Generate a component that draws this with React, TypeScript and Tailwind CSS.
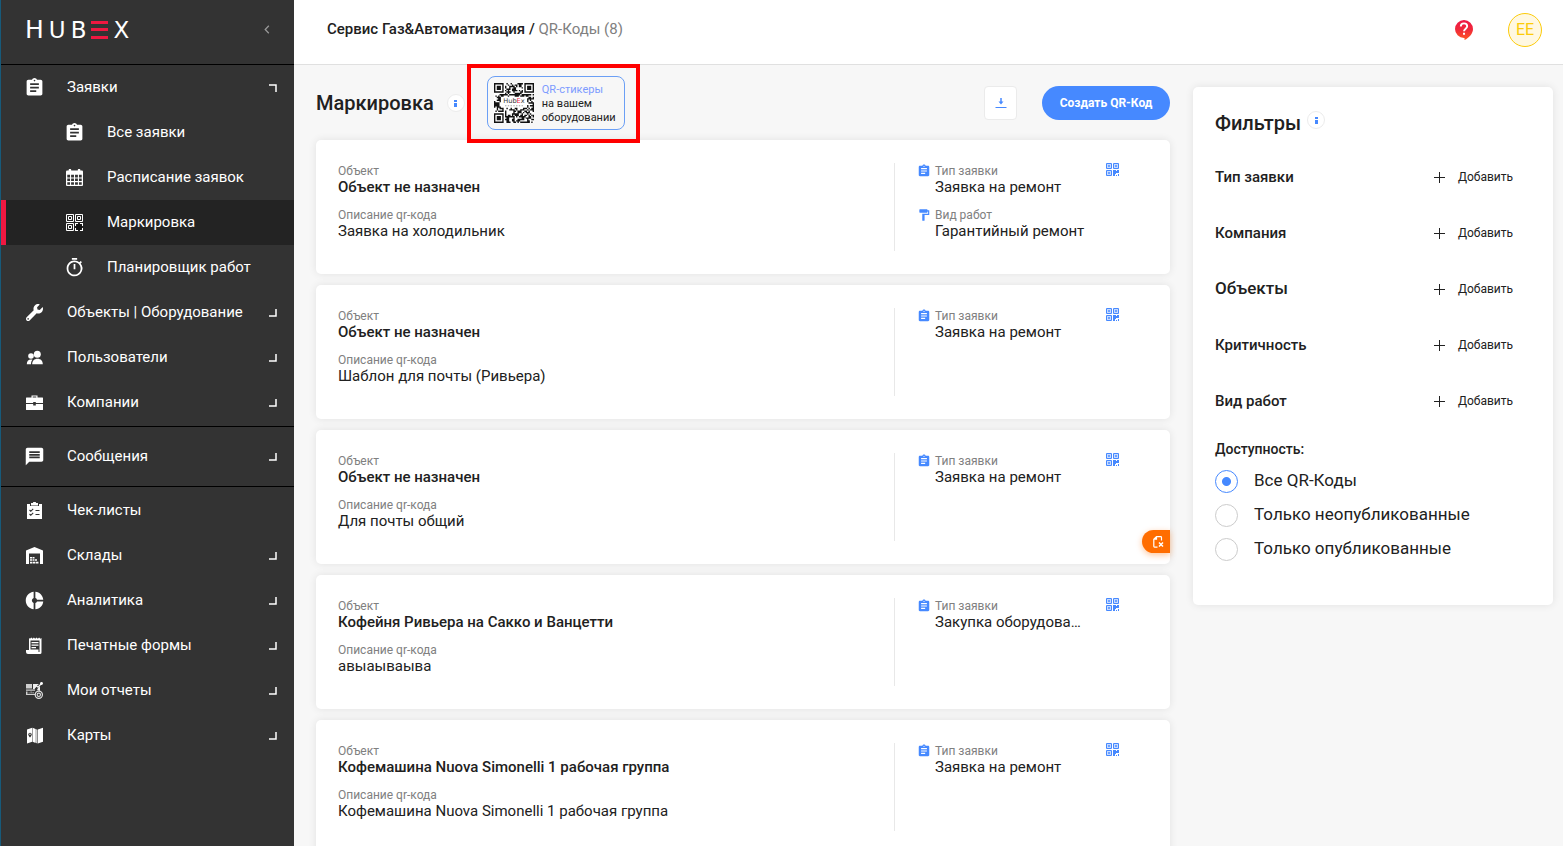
import type { ReactNode } from "react";
import { MdAssignment, MdDonutSmall, MdFormatPaint, MdMessage, MdOutlineTimer } from "react-icons/md";
import { FaWrench } from "react-icons/fa";

type IconProps = { className?: string };

function CalendarIcon({ className }: IconProps) {
  return (
    <svg viewBox="0 0 16 16" className={className} fill="currentColor" aria-hidden="true">
      <path
        fillRule="evenodd"
        d="M2.5 1.5V1a1.2 1.2 0 0 1 2.4 0v.5h6.2V1a1.2 1.2 0 0 1 2.4 0v.5H15a1 1 0 0 1 1 1V15a1 1 0 0 1-1 1H1a1 1 0 0 1-1-1V2.500a1 1 0 0 1 1-1zM1.200 5.500v2.500h2.600v-2.500zM4.800 5.500v2.500h2.700v-2.500zM8.500 5.500v2.500h2.700v-2.500zM12.200 5.500v2.500h2.600v-2.500zM1.200 9v2.400h2.600V9zM4.800 9v2.400h2.700V9zM8.500 9v2.400h2.700V9zM12.200 9v2.400h2.600V9zM1.200 12.400v2.400h2.600v-2.400zM4.800 12.400v2.400h2.700v-2.400zM8.500 12.400v2.400h2.700v-2.400zM12.200 12.400v2.400h2.600v-2.400z"
      />
    </svg>
  );
}

function QrMenuIcon({ className }: IconProps) {
  return (
    <svg viewBox="0 0 17 17" className={className} aria-hidden="true">
      <g fill="none" stroke="currentColor">
        <path d="M.5.5h7v7h-7zM9.500.5h7v7h-7zM.5 9.500h7v7h-7z" />
        <path d="M2.500 2.500h3v3h-3zM11.500 2.500h3v3h-3zM2.500 11.500h3v3h-3z" />
      </g>
      <path fill="currentColor" d="M9 9h3v1h-2v2H9zM14 9h3v3h-1v-2h-2zM9 14h1v2h2v1H9zM16 14h1v3h-3v-1h2z" />
      <circle cx="13" cy="13" r="3" fill="#111" />
    </svg>
  );
}

function QrCardIcon({ className }: IconProps) {
  return (
    <svg viewBox="0 0 13 13" className={className} aria-hidden="true">
      <path fill="currentColor" opacity=".3" d="M1 1h4v4H1zM8 1h4v4H8zM1 8h4v4H1z" />
      <g fill="none" stroke="currentColor">
        <path d="M.5.5h5v5h-5zM7.500.5h5v5h-5zM.5 7.500h5v5h-5z" />
      </g>
      <path fill="currentColor" opacity=".7" d="M2 2h2v2H2zM9 2h2v2H9zM2 9h2v2H2z" />
      <path fill="currentColor" d="M7 7h3v1h1V7h2v3h-3v1H9v2H7zM10 12h1v1h-1zM12 11h1v2h-1z" />
    </svg>
  );
}

function PeopleIcon({ className }: IconProps) {
  return (
    <svg viewBox="0 0 17 17" className={className} fill="currentColor" aria-hidden="true">
      <circle cx="11.300" cy="5.300" r="3.500" />
      <circle cx="5" cy="7" r="2.800" />
      <path d="M6.200 15.200c0-3.400 2-5.500 5.300-5.500s5.300 2.100 5.300 5.500zM.8 15.200c0-3 1.500-4.800 4.200-4.800.6 0 1.100.1 1.500.3C5.300 11.800 5 13.300 5 15.200z" />
    </svg>
  );
}

function BriefcaseIcon({ className }: IconProps) {
  return (
    <svg viewBox="0 0 17 17" className={className} fill="currentColor" aria-hidden="true">
      <path d="M5.500 3.500V1.500h6v2M.5 3.500h16a.5.5 0 0 1 .5.5v5H9.800V8H7.200v1H0V4a.5.5 0 0 1 .5-.5zM0 10h7.200v1.500h2.600V10H17v5.500a.5.5 0 0 1-.5.500H.5a.5.500 0 0 1-.5-.5z" />
      <path d="M6.700 3.500V2.500h3.600v1z" fill="#333" />
    </svg>
  );
}

function ChecklistIcon({ className }: IconProps) {
  return (
    <svg viewBox="0 0 17 17" className={className} aria-hidden="true">
      <path fill="currentColor" d="M1 2h3V4h9V2h3v15H1zM5 1h2a1.500 1.500 0 0 1 3 0h2v2.500H5z" />
      <path fill="none" stroke="#333" strokeWidth="1.100" d="M3.500 8l1.300 1.300 2.400-2.500M3.500 12l1.300 1.300 2.400-2.500M9.500 8.500h4M9.500 12.500h4" />
    </svg>
  );
}

function WarehouseIcon({ className }: IconProps) {
  return (
    <svg viewBox="0 0 17 17" className={className} fill="currentColor" aria-hidden="true">
      <path d="M0 3.500L8.500 0 17 3.500V17h-3V6.500H3V17H0z" />
      <path d="M4 10h2v1.500H4zM6.500 10h2v1.500h-2zM4 12.300h2v1.500H4zM6.500 12.300h2v1.500h-2zM9 12.300h2v1.500H9zM4 14.700h2.500v1.800H4zM7 14.700h2.300v1.800H7zM9.800 14.700h2.700v1.800H9.800z" />
    </svg>
  );
}

function FormsIcon({ className }: IconProps) {
  return (
    <svg viewBox="0 0 17 17" className={className} aria-hidden="true">
      <path fill="currentColor" d="M3 1l1 .8L5.300.5l1.300 1.300L7.900.5l1.300 1.300L10.500.5l1.300 1.300L13.100.5l1.200 1.300L15.500 1v14.500a1.500 1.500 0 0 1-1.500 1.500H2a2 2 0 0 1-2-2v-2h3z" />
      <path fill="#333" d="M4.500 3.500h9V15h-1v-2.500h-8z" />
      <path fill="currentColor" d="M5.500 5h7v1.300h-7zM5.500 7.500h7v1.300h-7zM5.500 10h4.500v1.200H5.500z" />
    </svg>
  );
}

function ReportsIcon({ className }: IconProps) {
  return (
    <svg viewBox="0 0 17 17" className={className} aria-hidden="true">
      <path fill="#cfcfcf" d="M0 2h6v4.500H0zM0 7.500h9v1.200H0zM0 9.500h1.500V12H9v1H0z" />
      <path fill="#aaa" d="M2.500 10.500h1.200v1H2.500zM4.500 9.500h1.200v2H4.500zM6.500 10h1.200v1.500H6.500z" />
      <path fill="#eee" d="M7 2h6l-3 2.500L8 7H7zM14 4v5l-3-1 1-2z" />
      <path fill="none" stroke="#f5f5f5" strokeWidth="1.200" d="M7.500 7l3-3.200 1.500 1.400L16 1" />
      <circle cx="15.500" cy="1.500" r="1.400" fill="#fff" />
      <circle cx="12.800" cy="12.800" r="3.600" fill="#333" stroke="#e5e5e5" strokeWidth="1.200" />
      <circle cx="12.800" cy="12.800" r="1.700" fill="none" stroke="#ddd" strokeWidth="1.100" />
    </svg>
  );
}

function MapIcon({ className }: IconProps) {
  return (
    <svg viewBox="0 0 17 17" className={className} aria-hidden="true">
      <path fill="#fff" d="M1 2.500L6.200.8v14L1 16.500zM11.800 2.500L17 .8v14L11.800 16.500z" />
      <path fill="#fff" d="M6.600.8L9 1.800v14L6.600 14.800z" />
      <path fill="#cfcfcf" d="M9 1.800l2.400 1v13.700l-2.400-1z" />
      <path fill="#333" d="M2.300 7.400a1.700 1.700 0 0 1 3.400 0c0 1.200-1.700 3-1.700 3S2.300 8.600 2.300 7.400z" />
      <circle cx="4" cy="7.300" r=".7" fill="#fff" />
    </svg>
  );
}

function Corner({ open }: { open?: boolean }) {
  return (
    <svg viewBox="0 0 8 8" className="size-2 shrink-0 text-white" aria-hidden="true">
      <path fill="none" stroke="currentColor" strokeWidth="1.500" d={open ? "M0 1h7v7" : "M0 7h7V0"} />
    </svg>
  );
}

type Item = {
  label: string;
  icon: ReactNode;
  sub?: boolean;
  active?: boolean;
  arrow?: "open" | "closed";
};

const own = "size-[17px] shrink-0";
const material = "size-[21px] shrink-0";

const topItems: Item[] = [
  { label: "Заявки", icon: <MdAssignment className={material} />, arrow: "open" },
  { label: "Все заявки", icon: <MdAssignment className={material} />, sub: true },
  { label: "Расписание заявок", icon: <CalendarIcon className={own} />, sub: true },
  { label: "Маркировка", icon: <QrMenuIcon className={own} />, sub: true, active: true },
  { label: "Планировщик работ", icon: <MdOutlineTimer className={material} />, sub: true },
  { label: "Объекты | Оборудование", icon: <FaWrench className={own} />, arrow: "closed" },
  { label: "Пользователи", icon: <PeopleIcon className={own} />, arrow: "closed" },
  { label: "Компании", icon: <BriefcaseIcon className={own} />, arrow: "closed" },
];

const messages: Item = { label: "Сообщения", icon: <MdMessage className={material} />, arrow: "closed" };

const bottomItems: Item[] = [
  { label: "Чек-листы", icon: <ChecklistIcon className={own} /> },
  { label: "Склады", icon: <WarehouseIcon className={own} />, arrow: "closed" },
  { label: "Аналитика", icon: <MdDonutSmall className={material} />, arrow: "closed" },
  { label: "Печатные формы", icon: <FormsIcon className={own} />, arrow: "closed" },
  { label: "Мои отчеты", icon: <ReportsIcon className={own} />, arrow: "closed" },
  { label: "Карты", icon: <MapIcon className={own} />, arrow: "closed" },
];

function NavItem({ item }: { item: Item }) {
  return (
    <a
      href="#"
      className={`flex h-[45px] items-center gap-6 border-l-[5px] pr-[17px] text-[15px] text-white ${
        item.active ? "border-[#ef1841] bg-[#232323]" : "border-transparent"
      } ${item.sub ? "pl-[60px]" : "pl-5"}`}
    >
      <span className="flex size-[17px] shrink-0 items-center justify-center">{item.icon}</span>
      <span className="grow pb-px">{item.label}</span>
      {item.arrow && <Corner open={item.arrow === "open"} />}
    </a>
  );
}

function Logo() {
  return (
    <a
      href="#"
      aria-label="HubEx"
      className="flex h-5 items-end gap-[5px] font-['DejaVu_Sans',sans-serif] text-[23px] leading-5 text-white"
    >
      <span className="text-[25px]">H</span>
      <span>U</span>
      <span>B</span>
      <span className="mb-px flex h-[18px] w-[17px] flex-col justify-between">
        <span className="h-[3px] bg-[#ef1841]" />
        <span className="h-[3px] bg-[#ef1841]" />
        <span className="h-[3px] bg-[#ef1841]" />
      </span>
      <span>X</span>
    </a>
  );
}

function Sidebar() {
  return (
    <aside className="flex w-[294px] shrink-0 flex-col border-l border-[#175a7a] bg-[#333333]">
      <div className="flex h-[65px] shrink-0 items-center justify-between border-b border-black px-6 pb-[5px]">
        <Logo />
        <button type="button" aria-label="Свернуть меню" className="text-[#999]">
          <svg viewBox="0 0 6 10" className="h-[9px] w-[6px]" aria-hidden="true">
            <path d="M5 .8L1 5l4 4.200" fill="none" stroke="currentColor" strokeWidth="1.400" />
          </svg>
        </button>
      </div>
      <nav>
        <div className="pb-px">
          {topItems.map((i) => (
            <NavItem key={i.label} item={i} />
          ))}
        </div>
        <div className="border-y border-black py-[7px]">
          <NavItem item={messages} />
        </div>
        <div className="pt-px">
          {bottomItems.map((i) => (
            <NavItem key={i.label} item={i} />
          ))}
        </div>
      </nav>
    </aside>
  );
}

function Info() {
  return (
    <button
      type="button"
      aria-label="Справка"
      className="flex size-[18px] items-center justify-center rounded-full border border-[#ececec] bg-white text-[#4689ff]"
    >
      <svg viewBox="0 0 3 7" className="h-[7px] w-[3px]" fill="currentColor" aria-hidden="true">
        <path d="M0 0h3v2H0zM0 3h3v4H0z" />
      </svg>
    </button>
  );
}

const QR = 29;

function buildQr(): string {
  let seed = 7;
  let d = "";
  const inFinder = (x: number, y: number) => (x < 8 && y < 8) || (x > QR - 9 && y < 8) || (x < 8 && y > QR - 9);
  for (let y = 0; y < QR; y++) {
    for (let x = 0; x < QR; x++) {
      seed = (seed * 1103515245 + 12345) % 2147483648;
      const inLabel = x > 4 && x < 24 && y > 9 && y < 18;
      if (!inFinder(x, y) && !inLabel && seed / 2147483648 > 0.45) d += `M${x} ${y}h1v1h-1z`;
    }
  }
  for (const [x, y] of [[0, 0], [QR - 7, 0], [0, QR - 7]]) {
    d += `M${x} ${y}h7v7h-7zM${x + 1} ${y + 1}v5h5v-5zM${x + 2} ${y + 2}h3v3h-3z`;
  }
  return d;
}

const qrPath = buildQr();

function Sticker() {
  return (
    <div className="relative z-10 ml-[22px]">
      <a
        href="#"
        className="flex h-[54px] w-[138px] items-center rounded-lg border border-[#6b9ff5] pl-[6px] text-[11px] leading-[14px] text-[#212121]"
      >
        <svg viewBox="0 0 29 29" className="size-10 shrink-0" aria-hidden="true">
          <path fill="#fff" d="M0 0h29v29H0z" />
          <path d={qrPath} fill="#111" />
          <text x="14.500" y="14.800" textAnchor="middle" fontSize="4.800" fontFamily="DejaVu Sans" fill="#333">
            Hub<tspan fill="#ef1841">E</tspan>x
          </text>
          <path d="M8 16.500h13" stroke="#777" strokeWidth=".5" strokeDasharray="1 1" />
        </svg>
        <span className="ml-2 pt-px">
          <span className="text-[#7d9bff]">QR-стикеры</span>
          <br />
          на вашем
          <br />
          оборудовании
        </span>
      </a>
      <span className="pointer-events-none absolute -bottom-[13px] -left-5 -right-[15px] -top-3 border-4 border-[#ff0000]" />
    </div>
  );
}

type Card = { object: string; description: string; type: string; work?: string };

const cards: Card[] = [
  { object: "Объект не назначен", description: "Заявка на холодильник", type: "Заявка на ремонт", work: "Гарантийный ремонт" },
  { object: "Объект не назначен", description: "Шаблон для почты (Ривьера)", type: "Заявка на ремонт" },
  { object: "Объект не назначен", description: "Для почты общий", type: "Заявка на ремонт" },
  { object: "Кофейня Ривьера на Сакко и Ванцетти", description: "авыаываыва", type: "Закупка оборудова…" },
  { object: "Кофемашина Nuova Simonelli 1 рабочая группа", description: "Кофемашина Nuova Simonelli 1 рабочая группа", type: "Заявка на ремонт" },
];

function Field({ label, value, strong }: { label: string; value: string; strong?: boolean }) {
  return (
    <div className="min-w-0 leading-4">
      <div className="text-[12px] text-[#808080]">{label}</div>
      <div className={`whitespace-nowrap text-[15px] text-[#212121] ${strong ? "font-medium" : ""}`}>{value}</div>
    </div>
  );
}

function QrCard({ card }: { card: Card }) {
  return (
    <article className="flex rounded-[5px] bg-white py-[23px] shadow-[0_0_8px_rgba(0,0,0,0.09)]">
      <div className="flex min-w-0 grow flex-col gap-3 pl-[22px]">
        <Field label="Объект" value={card.object} strong />
        <Field label="Описание qr-кода" value={card.description} />
      </div>
      <div className="flex h-[88px] w-[276px] shrink-0 justify-between border-l border-[#e8e8e8] pl-[22px] pr-[51px]">
        <div className="flex flex-col gap-3">
          <div className="flex gap-1">
            <MdAssignment className="mt-px size-[14px] shrink-0 text-[#4689ff]" />
            <Field label="Тип заявки" value={card.type} />
          </div>
          {card.work && (
            <div className="flex gap-1">
              <MdFormatPaint className="mt-px size-[14px] shrink-0 text-[#4689ff]" />
              <Field label="Вид работ" value={card.work} />
            </div>
          )}
        </div>
        <button type="button" aria-label="Показать QR-код" className="h-[13px] text-[#4689ff]">
          <QrCardIcon className="size-[13px]" />
        </button>
      </div>
    </article>
  );
}

const filters = [
  { label: "Тип заявки" },
  { label: "Компания" },
  { label: "Объекты", large: true },
  { label: "Критичность" },
  { label: "Вид работ" },
];
const options = ["Все QR-Коды", "Только неопубликованные", "Только опубликованные"];

function Filters() {
  return (
    <section className="w-[360px] shrink-0 self-start rounded-[5px] bg-white px-[22px] pb-[39px] pt-6 shadow-[0_0_8px_rgba(0,0,0,0.09)]">
      <div className="flex h-6 gap-[6px]">
        <h2 className="text-[20px] font-medium leading-6 text-[#212121]">Фильтры</h2>
        <Info />
      </div>
      <div className="mt-[14px]">
        {filters.map((f) => (
          <div key={f.label} className="flex h-14 items-center justify-between pr-[18px]">
            <span className={`font-medium text-[#212121] ${f.large ? "text-[17px]" : "text-[15px]"}`}>{f.label}</span>
            <button type="button" className="flex items-center gap-[13px] text-[12px] text-[#212121]">
              <svg viewBox="0 0 11 11" className="size-[11px]" aria-hidden="true">
                <path d="M5.500 0v11M0 5.500h11" stroke="currentColor" />
              </svg>
              Добавить
            </button>
          </div>
        ))}
      </div>
      <fieldset className="mt-[10px]">
        <legend className="text-[14px] font-medium leading-5 text-[#212121]">Доступность:</legend>
        <div className="pt-[5px]">
          {options.map((o, i) => (
            <label key={o} className="flex h-[34px] items-center gap-4 text-[17px] text-[#212121]">
              <input
                type="radio"
                name="availability"
                defaultChecked={i === 0}
                className="size-[23px] appearance-none rounded-full border border-[#cccccc] bg-white checked:border-[#4689ff] checked:bg-[radial-gradient(circle,#4689ff_4px,white_5px)]"
              />
              {o}
            </label>
          ))}
        </div>
      </fieldset>
    </section>
  );
}

export default function App() {
  return (
    <div className="flex h-screen overflow-hidden bg-[#f7f7f7] font-[Roboto,sans-serif] text-[#212121]">
      <Sidebar />
      <div className="flex min-w-0 grow flex-col">
        <header className="flex h-[65px] shrink-0 items-center border-b border-[#e0e0e0] bg-white pb-[5px] pl-[33px] pr-[21px]">
          <nav className="grow text-[15px] font-medium">
            <a href="#">Сервис Газ&amp;Автоматизация</a> / <span className="font-normal text-[#808080]">QR-Коды (8)</span>
          </nav>
          <button type="button" aria-label="Помощь" className="mr-[35px]">
            <svg viewBox="0 0 18 20" className="h-5 w-[18px]" aria-hidden="true">
              <defs>
                <linearGradient id="help" x1="0" y1="0" x2="0" y2="1">
                  <stop offset="0" stopColor="#ee1747" />
                  <stop offset=".5" stopColor="#f02a3a" />
                  <stop offset="1" stopColor="#ff5722" />
                </linearGradient>
              </defs>
              <path fill="url(#help)" d="M9 0a9 9 0 0 1 9 9c0 4.500-4 9-8.500 11v-2H9A9 9 0 0 1 9 0z" />
              <path d="M5.800 6.600C5.800 4.600 7.200 3.400 9 3.400s3.200 1.200 3.200 2.900c0 2.300-3.200 2.600-3.200 5" fill="none" stroke="#fff" strokeWidth="1.900" />
              <path fill="#fff" d="M8 12.800h2v2H8z" />
            </svg>
          </button>
          <button
            type="button"
            className="flex size-[34px] items-center justify-center rounded-full border border-[#fccb0a] bg-[#fff8e1] text-[16px] text-[#fccb0a]"
          >
            EE
          </button>
        </header>
        <main className="flex min-h-0 grow gap-[23px] pl-[22px] pr-[10px] pt-[11px]">
          <div className="flex min-w-0 grow flex-col">
            <div className="flex h-[54px] shrink-0 items-center">
              <h1 className="text-[20px] font-medium">Маркировка</h1>
              <span className="ml-[13px]">
                <Info />
              </span>
              <Sticker />
              <button
                type="button"
                aria-label="Скачать"
                className="ml-auto flex h-[34px] w-[33px] items-center justify-center rounded border border-[#ebebeb] bg-white text-[#4689ff]"
              >
                <svg viewBox="0 0 12 12" className="size-3" fill="none" stroke="currentColor" aria-hidden="true">
                  <path d="M6 1v5" strokeWidth="1.500" />
                  <path d="M3.500 4.500h5L6 7.500z" fill="currentColor" stroke="none" />
                  <path d="M.5 10.500h11" />
                </svg>
              </button>
              <button type="button" className="ml-[25px] h-[34px] w-32 rounded-full bg-[#4689ff] text-[12px] font-bold text-white">
                Создать QR-Код
              </button>
            </div>
            <div className="relative mt-[10px] flex flex-col gap-[11px]">
              {cards.map((c, i) => (
                <QrCard key={i} card={c} />
              ))}
              <button
                type="button"
                aria-label="Оставить отзыв"
                className="absolute right-0 top-[390px] flex h-[23px] w-7 items-center rounded-l-full bg-[#ff6d00] pl-[11px] text-white shadow-[0_2px_6px_rgba(255,109,0,0.4)]"
              >
                <svg viewBox="0 0 11 12" className="h-3 w-[11px]" fill="none" stroke="currentColor" strokeWidth="1.200" aria-hidden="true">
                  <path d="M8.500 4.500V1.500a.8.800 0 0 0-.8-.8H3.500L.8 3.200v7.100a.8.800 0 0 0 .8.800H4.500M3.500.8v2.400H.8" />
                  <path strokeWidth="1.500" d="M6 6.500l4 4M10 6.500l-4 4" />
                </svg>
              </button>
            </div>
          </div>
          <div className="pt-[11px]">
            <Filters />
          </div>
        </main>
      </div>
    </div>
  );
}
